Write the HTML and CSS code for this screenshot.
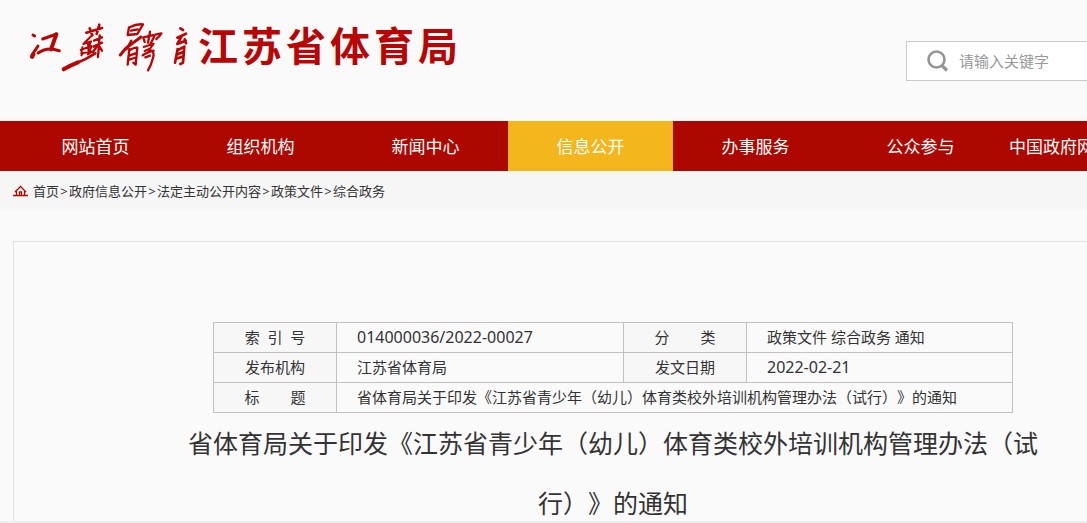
FILE: index.html
```html
<!DOCTYPE html>
<html lang="zh-CN">
<head>
<meta charset="utf-8">
<title>江苏省体育局</title>
<link rel="stylesheet" href="styles.css">
</head>
<body>
<header class="header wrap">
  <a class="brand" href="#">
    <svg class="brand-script" viewBox="0 0 540 225" aria-hidden="true">
      <g fill="none" stroke="#b80505" stroke-linecap="round" stroke-linejoin="round">
        <path stroke-width="9" d="M39 75l5 3"/>
        <path stroke-width="13" d="M36 140l4-7"/>
        <path stroke-width="9" d="M38 132L54 108"/>
        <path stroke-width="9" d="M68 87l42-15"/>
        <path stroke-width="12" d="M109 73L93 118"/>
        <path stroke-width="9" d="M54 129q20-14 43-12l21 5"/>
        <path stroke-width="8" d="M199 68l47-14M209 55l8 21M238 44l-8 28"/>
        <path stroke-width="6" d="M214 78l-24 24 23-8-9 22M182 120l32-12-5 18-25 4 3-18M204 100l2 28M184 136l4-5M204 133l12-8"/>
        <path stroke-width="7" d="M222 92l24-10M220 110l26-12M239 76l-5 65M233 106l-14 20M237 108l9 14"/>
        <path stroke-width="8" d="M226 130q-28 18-54 28"/>
        <path stroke-width="12" d="M174 157q-21 8-43 21"/>
        <path stroke-width="7" d="M327 52l-4 23 29-3 17-29q-20-2-40 9M333 62l20-4"/>
        <path stroke-width="9" d="M301 135l16-20 46-34"/>
        <path stroke-width="7" d="M334 92l-15 26M328 117l-5 47M330 120q13-9 22-7l-5 51-7-6M330 136l16-6M328 149l15-5"/>
        <path stroke-width="7" d="M374 96l-4-14q26-6 54-12-6 10-15 17M390 65l-6 33M403 79l-13 26"/>
        <path stroke-width="6" d="M371 111l30-10-10 14-17 8"/>
        <path stroke-width="7" d="M368 136q19-12 33-14M386 120q20 2 13 24-5 20-15 37M376 142l14-5"/>
        <path stroke-width="8" d="M481 55l8 5"/>
        <path stroke-width="8" d="M472 83l26-12M486 77l-14 25 25-10M494 88l4 12"/>
        <path stroke-width="8" d="M473 117l-8 41M474 120l19-10-4 48-8 4M475 132l13-5M473 145l13-5"/>
      </g>
    </svg>
    <span class="brand-name"><span>江</span><span>苏</span><span>省</span><span>体</span><span>育</span><span>局</span></span>
  </a>
  <form class="search" role="search">
    <svg class="search-icon" viewBox="0 0 22 22" aria-hidden="true">
      <circle cx="9.500" cy="9.500" r="8" fill="none" stroke="#959595" stroke-width="2.6"/>
      <path d="M15 15.500l5 5" stroke="#959595" stroke-width="3.2"/>
    </svg>
    <input class="search-input" type="text" placeholder="请输入关键字" aria-label="请输入关键字">
  </form>
</header>
<nav class="nav">
  <div class="nav-list wrap">
    <a class="nav-item" href="#">网站首页</a>
    <a class="nav-item" href="#">组织机构</a>
    <a class="nav-item" href="#">新闻中心</a>
    <a class="nav-item nav-item-active" href="#">信息公开</a>
    <a class="nav-item" href="#">办事服务</a>
    <a class="nav-item" href="#">公众参与</a>
    <a class="nav-item nav-item-wide" href="#">中国政府网</a>
  </div>
</nav>
<div class="crumbs">
  <div class="crumbs-list wrap">
    <svg class="home-icon" viewBox="0 0 16 12" aria-hidden="true">
      <path d="M0 10.500h15M2 7l5.500-5.500L13 7M3.500 6v4M11.500 6v4M6.500 10V7h2v3" fill="none" stroke="#b00a00" stroke-width="1.300"/>
    </svg>
    <a href="#">首页</a><span class="sep">&gt;</span><a href="#">政府信息公开</a><span class="sep">&gt;</span><a href="#">法定主动公开内容</a><span class="sep">&gt;</span><a href="#">政策文件</a><span class="sep">&gt;</span><a href="#">综合政务</a>
  </div>
</div>
<main class="wrap">
  <article class="article">
    <table class="meta">
      <colgroup><col class="col-label"><col class="col-main"><col class="col-label"><col></colgroup>
      <tr>
        <th scope="row">索&nbsp;&nbsp;引&nbsp;&nbsp;号</th><td class="num">014000036/2022-00027</td>
        <th scope="row">分&nbsp;&nbsp;&nbsp;&nbsp;&nbsp;&nbsp;&nbsp;&nbsp;类</th><td>政策文件 综合政务 通知</td>
      </tr>
      <tr>
        <th scope="row">发布机构</th><td>江苏省体育局</td>
        <th scope="row">发文日期</th><td class="num">2022-02-21</td>
      </tr>
      <tr>
        <th scope="row">标&nbsp;&nbsp;&nbsp;&nbsp;&nbsp;&nbsp;&nbsp;&nbsp;题</th><td colspan="3">省体育局关于印发《江苏省青少年（幼儿）体育类校外培训机构管理办法（试行）》的通知</td>
      </tr>
    </table>
    <h1 class="title">省体育局关于印发《江苏省青少年（幼儿）体育类校外培训机构管理办法（试行）》的通知</h1>
  </article>
</main>
<div class="bottom-edge"></div>
</body>
</html>
```
FILE: styles.css
```css
* { box-sizing: border-box; }
html { overflow: hidden; }
body {
  margin: 0;
  min-width: 1226px;
  background: #fafafa;
  color: #333;
  font: 15px/20px "Noto Sans", "Noto Sans CJK SC", sans-serif;
  text-spacing-trim: space-all;
}
a { color: inherit; text-decoration: none; }
.wrap { width: 1200px; margin: 0 auto; }

.header {
  display: flex;
  justify-content: space-between;
  align-items: flex-start;
  height: 121px;
}
.brand { display: flex; padding: 10px 0 0 7px; }
.brand-script { width: 180px; height: 75px; margin-right: -2px; }
.brand-name {
  display: flex;
  gap: 4px;
  padding-top: 4px;
  color: #b80505;
  font: bold 40px/60px "Noto Sans CJK SC", sans-serif;
  text-shadow: 0 0 3px #fff;
}
.search {
  display: flex;
  align-items: center;
  gap: 10px;
  width: 307px;
  height: 40px;
  margin-top: 41px;
  padding-left: 20px;
  border: 1px solid #ccc;
  background: #fff;
}
.search-icon { width: 22px; height: 22px; }
.search-input {
  flex: 1;
  min-width: 0;
  padding: 0;
  border: 0;
  outline: 0;
  background: none;
  color: #333;
  font: 15px/20px "Noto Sans CJK SC", sans-serif;
}
.search-input::placeholder { color: #999; }

.nav { background: #ac0800; }
.nav-list { display: flex; }
.nav-item {
  flex: 0 0 165px;
  padding-top: 2px;
  color: #fff;
  font-size: 17px;
  line-height: 48px;
  text-align: center;
}
.nav-item-active { background: #f3b61c; }
.nav-item-wide { flex: 1; padding-left: 6px; text-align: left; }

.crumbs { background: #f6f6f6; font-size: 13px; }
.crumbs-list { display: flex; align-items: center; height: 39px; }
.home-icon { width: 16px; height: 12px; margin-right: 4px; }
.sep { width: 10px; text-align: center; }

.article {
  margin-top: 31px;
  padding: 80px 160px 40px;
  border: 1px solid #e1e1e1;
}
.meta {
  width: 800px;
  margin: 0 auto;
  border-collapse: collapse;
  table-layout: fixed;
}
.col-label { width: 123px; }
.col-main { width: 287px; }
.meta th, .meta td {
  height: 30px;
  padding: 0 0 2px;
  border: 1px solid #c2c0c0;
  font-weight: normal;
  line-height: 20px;
}
.meta th { background: #f7f7f7; }
.meta td { padding-left: 20px; text-align: left; }
.meta .num { font-size: 16px; }
.title {
  margin: 0;
  font-size: 25px;
  font-weight: normal;
  line-height: 60px;
  text-align: center;
}
.bottom-edge {
  position: fixed;
  right: 0;
  bottom: 0;
  left: 0;
  height: 2px;
  background: #efefef;
}
```
